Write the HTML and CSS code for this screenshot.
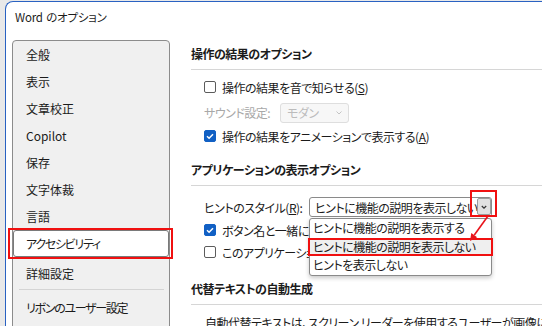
FILE: index.html
```html
<!DOCTYPE html>
<html lang="ja">
<head>
<meta charset="utf-8">
<title>Word のオプション</title>
<link rel="stylesheet" href="styles.css">
</head>
<body>
<div class="dialog">
  <div class="titlebar">Word のオプション</div>
  <div class="main">
    <nav class="nav">
      <div class="nav-item">全般</div>
      <div class="nav-item">表示</div>
      <div class="nav-item">文章校正</div>
      <div class="nav-item">Copilot</div>
      <div class="nav-item">保存</div>
      <div class="nav-item">文字体裁</div>
      <div class="nav-item">言語</div>
      <div class="nav-item selected kana">アクセシビリティ<span class="mark mark-nav"></span></div>
      <div class="nav-item after-sel">詳細設定</div>
      <div class="nav-sep"></div>
      <div class="nav-item kana">リボンのユーザー設定</div>
    </nav>
    <section class="content">
      <h2 class="heading">操作の結果のオプション</h2>
      <div class="row r1"><span class="cb"></span><span>操作の結果を音で知らせる(<u>S</u>)</span></div>
      <div class="row r2">
        <span class="label-dis">サウンド設定:</span>
        <span class="select-dis">モダン<svg class="chev-dis" viewBox="0 0 8 6" width="8" height="6"><polyline points="1.5,1.5 4,4 6.5,1.5" fill="none" stroke="#c4c4c4" stroke-width="1"/></svg></span>
      </div>
      <div class="row r3"><span class="cb checked"><svg viewBox="0 0 12 12" width="12" height="12"><polyline points="3,6.2 5.1,8.2 9,4.2" fill="none" stroke="#fff" stroke-width="1.5"/></svg></span><span>操作の結果をアニメーションで表示する(<u>A</u>)</span></div>

      <h2 class="heading h-2">アプリケーションの表示オプション</h2>
      <div class="row r4">
        <span class="label-hint">ヒントのスタイル(<u>R</u>):</span>
        <div class="select">
          <span class="select-text">ヒントに機能の説明を表示しない</span>
          <span class="drop-btn"><svg viewBox="0 0 12 14" width="12" height="14"><polyline points="3.8,6 6,8.2 8.2,6" fill="none" stroke="#333" stroke-width="1.2"/></svg><span class="mark mark-btn"></span></span>
          <div class="list">
            <div class="list-item">ヒントに機能の説明を表示する</div>
            <div class="list-item hl">ヒントに機能の説明を表示しない<span class="mark mark-item"></span></div>
            <div class="list-item">ヒントを表示しない</div>
          </div>
        </div>
      </div>
      <div class="row r5"><span class="cb checked"><svg viewBox="0 0 12 12" width="12" height="12"><polyline points="3,6.2 5.1,8.2 9,4.2" fill="none" stroke="#fff" stroke-width="1.5"/></svg></span><span>ボタン名と一緒にショートカット キーを表示</span></div>
      <div class="row r6"><span class="cb"></span><span>このアプリケーションの機能のヒントを表示</span></div>

      <h2 class="heading h-3">代替テキストの自動生成</h2>
      <p class="para">自動代替テキストは、スクリーン リーダーを使用するユーザーが画像にアクセスできるようにします。</p>
    </section>
  </div>
</div>
<svg class="arrow" viewBox="0 0 542 326" width="542" height="326">
  <line x1="488" y1="216" x2="474.3" y2="235" stroke="#e8141b" stroke-width="1.6"/>
  <polygon points="470,241 477.2,237.2 471.3,233" fill="#e8141b"/>
</svg>
</body>
</html>
```
FILE: styles.css
```css
* { box-sizing: border-box; }
html, body { overflow: hidden; }
body {
  margin: 0;
  width: 542px;
  height: 326px;
  background: #e9e9e9;
  font-family: "Noto Sans CJK JP", "Noto Sans", sans-serif;
  font-size: 12px;
  letter-spacing: -0.5px;
  color: #1b1b1b;
  font-feature-settings: "palt";
  position: relative;
}
.dialog {
  margin: 1px 0 0 5px;
  width: 620px;
  height: 400px;
  background: #fff;
  border-top: 1px solid #2a62c2;
  border-left: 1px solid #2a62c2;
  border-top-left-radius: 8px;
}
.titlebar {
  height: 30px;
  line-height: 30px;
  padding-left: 9px;
  font-size: 11.5px;
  letter-spacing: -0.2px;
  word-spacing: 1px;
}
.main {
  display: flex;
  padding-top: 8px;
}
.nav {
  margin-left: 6px;
  width: 158px;
  height: 340px;
  flex: none;
  background: #f0f0f0;
  border: 1px solid #8c8c8c;
  border-radius: 4px 4px 0 0;
}
.nav-item {
  height: 27px;
  line-height: 27px;
  padding-left: 13px;
  position: relative;
  white-space: nowrap;
  letter-spacing: 0;
}
.nav-item.kana { letter-spacing: -1.3px; }
.nav-item.selected {
  background: #fff;
  border: 1px solid #7a7a7a;
  border-radius: 3px;
  line-height: 25px;
  padding-left: 12px;
}
.nav-item.after-sel { margin-top: 3px; }
.nav-sep {
  height: 1px;
  background: #d4d4d4;
  margin: 2px 5px 4px 6px;
}
.mark {
  position: absolute;
  border: 2px solid #f01010;
  pointer-events: none;
}
.mark-nav { left: -6px; right: -5px; top: -3px; bottom: -3px; }
.content {
  margin-left: 21px;
  flex: 1;
  padding-top: 4px;
  min-width: 0;
}
.heading {
  margin: 0;
  font-size: 12px;
  font-weight: 700;
  letter-spacing: -0.5px;
  line-height: 20px;
  padding-bottom: 5px;
  border-bottom: 1px solid #d6d6d6;
}
.h-2 { margin-top: 14px; }
.h-3 { margin-top: 16px; }
.row {
  display: flex;
  align-items: center;
  padding-left: 13px;
  white-space: nowrap;
}
.r1 { margin-top: 5px; height: 24px; }
.r2 { height: 27px; }
.r3 { height: 20px; }
.r4 { margin-top: 9px; height: 24px; }
.r5, .r6 { height: 22px; }
.cb {
  width: 12px;
  height: 12px;
  border: 1px solid #5c5c5c;
  border-radius: 2px;
  margin-right: 6px;
  flex: none;
  background: #fff;
  display: flex;
  align-items: center;
  justify-content: center;
}
.cb.checked {
  background: #1160c4;
  border-color: #1160c4;
}
.cb svg { display: block; flex: none; }
u { text-underline-offset: 1px; }
.label-dis {
  width: 76px;
  color: #a8a8a8;
}
.select-dis {
  width: 69px;
  height: 20px;
  border: 1px solid #dedede;
  border-radius: 3px;
  background: #f7f7f7;
  color: #bcbcbc;
  display: flex;
  align-items: center;
  justify-content: space-between;
  padding: 0 5px 0 6px;
}
.label-hint { width: 105px; }
.select {
  position: relative;
  width: 183px;
  height: 20px;
  border: 1px solid #8a8a8a;
  border-radius: 3px;
  background: #fff;
  display: flex;
  align-items: center;
  padding-left: 5px;
}
.select-text { flex: 1; overflow: hidden; }
.drop-btn {
  position: relative;
  width: 14px;
  height: 17px;
  margin-top: -1px;
  background: #e2e2e2;
  border: 1px solid #9c9c9c;
  border-radius: 2px;
  display: flex;
  align-items: center;
  justify-content: center;
  flex: none;
}
.mark-btn { left: -8px; right: -7px; top: -9px; bottom: -3px; }
.list {
  position: absolute;
  left: -1px;
  top: 20px;
  width: 183px;
  background: #fff;
  border: 1px solid #8a8a8a;
  border-radius: 3px;
  box-shadow: 0 2px 4px rgba(0, 0, 0, 0.22);
  z-index: 2;
}
.list-item {
  position: relative;
  height: 18.5px;
  line-height: 18.5px;
  padding-left: 3px;
  white-space: nowrap;
}
.list-item.hl { background: #efefef; }
.mark-item { left: -2px; right: -2px; top: 0; bottom: 0; }
.para {
  margin: 8px 0 0;
  line-height: 20px;
  padding-left: 14px;
  white-space: nowrap;
}
.arrow {
  position: absolute;
  left: 0;
  top: 0;
  pointer-events: none;
  z-index: 5;
}
```
